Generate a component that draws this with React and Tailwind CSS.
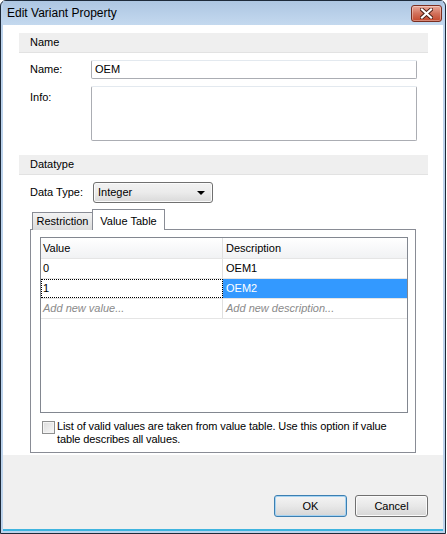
import React from "react";

const font = { fontFamily: '"Liberation Sans", Arial, sans-serif' };

// Gray section header band (Name / Datatype)
const SectionHeader = ({ title }) => (
  <div className="h-[20px] bg-[#efefef] border-b border-[#e2e2e2] pl-[11px] flex items-center text-[11px] text-black">
    {title}
  </div>
);

const WinButton = ({ label, isDefault }) => (
  <button
    className={`w-[73px] h-[22px] rounded-[3px] border text-[11px] text-black bg-gradient-to-b from-[#f4f4f4] via-[#e8e8e8] to-[#d6d6d6] ${
      isDefault ? "border-[#3c7fb1] shadow-[inset_0_0_0_1px_#a6d3f2]" : "border-[#707070] shadow-[inset_0_0_0_1px_#fbfbfb]"
    }`}>
    {label}
  </button>
);

const CloseButton = () => (
  <div className="w-[31px] h-[17px] rounded-[3px] border border-[#7a2e20] bg-gradient-to-b from-[#e9a99a] via-[#d2715b] to-[#c3462a] flex items-center justify-center shadow-[inset_0_0_0_1px_rgba(255,255,255,0.35)]">
    <svg width="13" height="11" viewBox="0 0 13 11">
      <path d="M2 1.5 L11 9.5 M11 1.5 L2 9.5" stroke="#4a1d14" strokeWidth="4" strokeLinecap="square" />
      <path d="M2 1.5 L11 9.5 M11 1.5 L2 9.5" stroke="#ffffff" strokeWidth="2.2" strokeLinecap="square" />
    </svg>
  </div>
);

const rows = [
  { value: "0", desc: "OEM1" },
  { value: "1", desc: "OEM2", selected: true },
];

export default function App() {
  return (
    <div className="w-[447px] h-[534px] bg-white" style={font}>
      <div className="w-[446px] h-[534px] border border-[#1d2a3a] rounded-t-[6px] bg-[#bcd3ec] flex flex-col px-[2px] pb-[2px]">
        {/* title bar */}
        <div className="h-[24px] flex items-center justify-between pl-[4px] pr-[1px] bg-gradient-to-b from-[#adc6e2] to-[#c4d9ef]">
          <span className="text-[12px] text-black">Edit Variant Property</span>
          <CloseButton />
        </div>

        {/* client area */}
        <div className="flex-1 flex flex-col border-b-[2px] border-[#3fb4df]">
          <div className="flex-1 bg-white pt-[8px] pl-[16px] pr-[15px] flex flex-col">
            <SectionHeader title="Name" />

            <div className="flex items-center mt-[7px] pl-[11px] pr-[11px]">
              <span className="w-[61px] text-[11px]">Name:</span>
              <div className="flex-1 h-[19px] border border-[#abadb3] border-t-[#e3e9ef] rounded-[2px] px-[3px] text-[11px] flex items-center">
                OEM
              </div>
            </div>
            <div className="flex mt-[7px] pl-[11px] pr-[11px]">
              <span className="w-[61px] text-[11px] pt-[3px]">Info:</span>
              <div className="flex-1 h-[55px] border border-[#abadb3] border-t-[#e3e9ef] rounded-[2px]" />
            </div>

            <div className="mt-[14px]">
              <SectionHeader title="Datatype" />
            </div>

            <div className="flex items-center mt-[7px] pl-[11px]">
              <span className="w-[63px] text-[11px]">Data Type:</span>
              <div className="w-[120px] h-[21px] rounded-[3px] border border-[#707070] bg-gradient-to-b from-[#f2f2f2] via-[#ebebeb] to-[#d9d9d9] flex items-center justify-between pl-[4px] pr-[7px] text-[11px] shadow-[inset_0_0_0_1px_#fbfbfb]">
                Integer
                <svg width="8" height="4" viewBox="0 0 8 4">
                  <path d="M0 0 H8 L4 4 Z" fill="#000" />
                </svg>
              </div>
            </div>

            {/* tabs */}
            <div className="mt-[6px] ml-[13px] flex items-end h-[21px] relative z-10">
              <div className="w-[61px] h-[18px] border border-b-0 border-[#898c95] bg-gradient-to-b from-[#f3f3f3] to-[#dbdbdb] text-[11px] flex items-center justify-center">
                Restriction
              </div>
              <div className="w-[73px] h-[21px] -ml-px border border-b-0 border-[#898c95] bg-white text-[11px] flex items-start justify-center pt-[3px]">
                Value Table
              </div>
            </div>

            {/* tab panel */}
            <div className="ml-[11px] mr-[12px] -mt-px h-[224px] border border-[#898c95] bg-white pt-[7px] pl-[9px] pr-[7px] flex flex-col">
              <div className="h-[176px] border border-[#828790] flex flex-col text-[11px]">
                <div className="h-[21px] flex border-b border-[#e5e5e5] bg-gradient-to-b from-white to-[#f1f2f4]">
                  <div className="w-[182px] border-r border-[#e0e0e0] pl-[2px] flex items-center">Value</div>
                  <div className="flex-1 pl-[3px] flex items-center">Description</div>
                </div>
                {rows.map((r) => (
                  <div key={r.value} className="h-[20px] flex border-b border-[#e5e5e5]">
                    <div
                      className={`w-[182px] border-r border-[#e0e0e0] pl-[2px] flex items-center ${
                        r.selected ? "outline-1 outline-dotted outline-black -outline-offset-1" : ""
                      }`}>
                      {r.value}
                    </div>
                    <div
                      className={`flex-1 pl-[3px] flex items-center ${
                        r.selected ? "bg-[#3399ff] text-white" : ""
                      }`}>
                      {r.desc}
                    </div>
                  </div>
                ))}
                <div className="h-[20px] flex border-b border-[#e5e5e5] italic text-[#8a8a8a]">
                  <div className="w-[182px] border-r border-[#e0e0e0] pl-[2px] flex items-center">
                    Add new value...
                  </div>
                  <div className="flex-1 pl-[3px] flex items-center">Add new description...</div>
                </div>
              </div>

              <div className="flex mt-[7px] pl-[2px]">
                <div className="w-[13px] h-[13px] mt-[1px] shrink-0 border border-[#8e8f8f] bg-gradient-to-br from-[#dcdcdc] to-[#f8f8f8] shadow-[inset_0_0_0_1px_#f4f4f4]" />
                <p className="ml-[2px] text-[11px] leading-[13px] tracking-[-0.1px]">
                  List of valid values are taken from value table. Use this option if value table describes all values.
                </p>
              </div>
            </div>
          </div>

          {/* footer */}
          <div className="h-[74px] bg-[#f0f0f0] flex items-end justify-end gap-[8px] pr-[15px] pb-[12px]">
            <WinButton label="OK" isDefault />
            <WinButton label="Cancel" />
          </div>
        </div>
      </div>
    </div>
  );
}
